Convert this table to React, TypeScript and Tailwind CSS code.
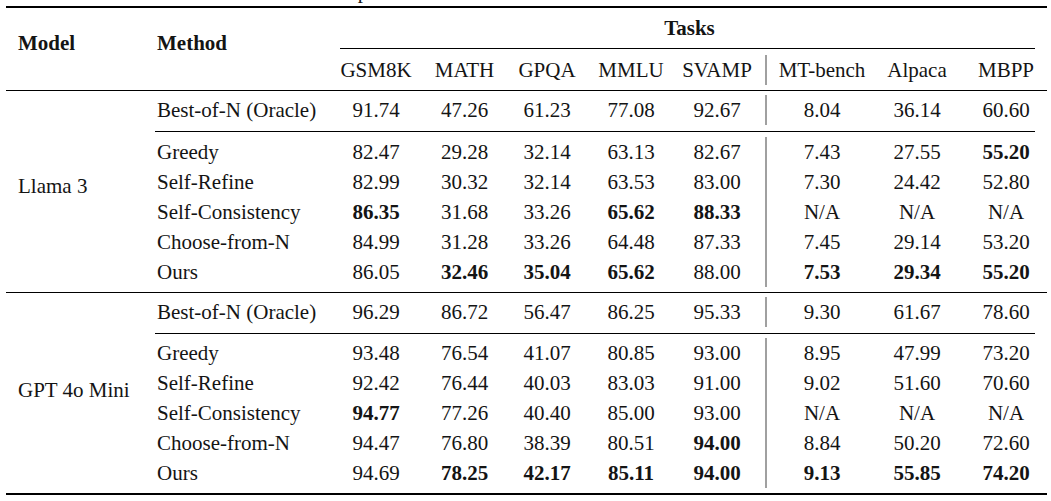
const cols = "grid grid-cols-[88px_89px_76px_92px_80px_18px_94px_96px_82px]";
const rowCols = "grid grid-cols-[187px_88px_89px_76px_92px_80px_18px_94px_96px_82px]";

type Block = {
	model: string;
	modelPad: string;
	oracle: string[];
	rows: string[][];
	lowerPad: string;
};

// "*" in front of a value marks it bold
const blocks: Block[] = [
	{
		model: "Llama 3",
		modelPad: "pt-[80px]",
		oracle: ["91.74", "47.26", "61.23", "77.08", "92.67", "8.04", "36.14", "60.60"],
		rows: [
			["Greedy", "82.47", "29.28", "32.14", "63.13", "82.67", "7.43", "27.55", "*55.20"],
			["Self-Refine", "82.99", "30.32", "32.14", "63.53", "83.00", "7.30", "24.42", "52.80"],
			["Self-Consistency", "*86.35", "31.68", "33.26", "*65.62", "*88.33", "N/A", "N/A", "N/A"],
			["Choose-from-N", "84.99", "31.28", "33.26", "64.48", "87.33", "7.45", "29.14", "53.20"],
			["Ours", "86.05", "*32.46", "*35.04", "*65.62", "88.00", "*7.53", "*29.34", "*55.20"],
		],
		lowerPad: "pt-[5px] pb-[5px]",
	},
	{
		model: "GPT 4o Mini",
		modelPad: "pt-[82px]",
		oracle: ["96.29", "86.72", "56.47", "86.25", "95.33", "9.30", "61.67", "78.60"],
		rows: [
			["Greedy", "93.48", "76.54", "41.07", "80.85", "93.00", "8.95", "47.99", "73.20"],
			["Self-Refine", "92.42", "76.44", "40.03", "83.03", "91.00", "9.02", "51.60", "70.60"],
			["Self-Consistency", "*94.77", "77.26", "40.40", "85.00", "93.00", "N/A", "N/A", "N/A"],
			["Choose-from-N", "94.47", "76.80", "38.39", "80.51", "*94.00", "8.84", "50.20", "72.60"],
			["Ours", "94.69", "*78.25", "*42.17", "*85.11", "*94.00", "*9.13", "*55.85", "*74.20"],
		],
		lowerPad: "pt-[4px] pb-[5px]",
	},
];

function Sep() {
	return (
		<div className="flex justify-center">
			<div className="w-[2px] h-full bg-[#a0a0a0]" />
		</div>
	);
}

function Val({ v }: { v: string }) {
	const bold = v.startsWith("*");
	return <div className={bold ? "text-center font-bold" : "text-center"}>{bold ? v.slice(1) : v}</div>;
}

function Row({ method, values }: { method: string; values: string[] }) {
	return (
		<div className={`${rowCols} h-[30px] leading-[30px]`}>
			<div className="pl-[12px]">{method}</div>
			{values.slice(0, 5).map((v, i) => (
				<Val key={i} v={v} />
			))}
			<Sep />
			{values.slice(5).map((v, i) => (
				<Val key={i + 5} v={v} />
			))}
		</div>
	);
}

export default function App() {
	const heads = ["GSM8K", "MATH", "GPQA", "MMLU", "SVAMP"];
	const heads2 = ["MT-bench", "Alpaca", "MBPP"];

	return (
		<div className="w-[1051px] h-[501px] bg-white text-[#141414] font-['Liberation_Serif',serif] text-[21px] leading-[30px] overflow-hidden">
			{/* cut-off caption line above the table */}
			<div className="h-[6px] overflow-hidden">
				<div className="mt-[-24px] pl-[209px] whitespace-nowrap">Performance comparison</div>
			</div>

			<div className="ml-[6px] w-[1041px] flex flex-col">
				<div className="h-[2px] bg-black" />

				<div className="flex">
					<div className="w-[139px] pl-[12px] pt-[20px] font-bold">Model</div>
					<div className="w-[187px] pl-[12px] pt-[20px] font-bold">Method</div>
					<div className="w-[715px] flex flex-col">
						<div className="pt-[5px] pb-[5px] text-center font-bold">Tasks</div>
						<div className="h-px bg-black ml-[8px] mr-[12px]" />
						<div className={`${cols} mt-[6px] mb-[5px] h-[30px]`}>
							{heads.map((h) => (
								<div key={h} className="text-center">
									{h}
								</div>
							))}
							<Sep />
							{heads2.map((h) => (
								<div key={h} className="text-center">
									{h}
								</div>
							))}
						</div>
					</div>
				</div>

				{blocks.map((b) => (
					<div key={b.model} className="flex flex-col">
						<div className="h-px bg-black" />
						<div className="flex">
							<div className={`w-[139px] pl-[12px] ${b.modelPad}`}>{b.model}</div>
							<div className="w-[902px] flex flex-col">
								<div className="pt-[4px] pb-[6px]">
									<Row method="Best-of-N (Oracle)" values={b.oracle} />
								</div>
								<div className="h-px bg-black ml-[10px] mr-[12px]" />
								<div className={b.lowerPad}>
									{b.rows.map((r) => (
										<Row key={r[0]} method={r[0]} values={r.slice(1)} />
									))}
								</div>
							</div>
						</div>
					</div>
				))}

				<div className="h-[2px] bg-black" />
			</div>
		</div>
	);
}
